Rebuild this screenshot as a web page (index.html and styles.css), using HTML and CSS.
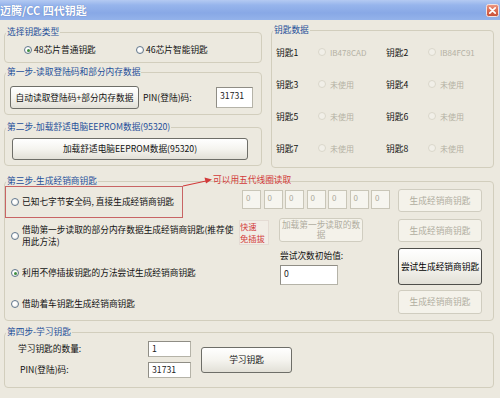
FILE: index.html
```html
<!DOCTYPE html>
<html lang="zh-CN">
<head>
<meta charset="utf-8">
<title>迈腾/CC 四代钥匙</title>
<link rel="stylesheet" href="styles.css">
</head>
<body>
<div class="window">
  <div class="titlebar">
    <span class="title">迈腾/CC 四代钥匙</span>
    <span class="close">
      <svg width="13" height="13" viewBox="0 0 13 13">
        <defs>
          <linearGradient id="cg" x1="0" y1="0" x2="0" y2="1">
            <stop offset="0" stop-color="#EE9A86"/>
            <stop offset="0.5" stop-color="#DB6A52"/>
            <stop offset="1" stop-color="#C7503A"/>
          </linearGradient>
        </defs>
        <rect x="0.5" y="0.5" width="12" height="12" rx="2" fill="url(#cg)" stroke="#F3E3E0"/>
        <path d="M3.8 3.8 L9.2 9.2 M9.2 3.8 L3.8 9.2" stroke="#FFFFFF" stroke-width="1.7" stroke-linecap="round"/>
      </svg>
    </span>
  </div>

  <div class="content">
    <div class="top">
      <div class="left-col">
        <fieldset class="group g1">
          <legend>选择钥匙类型</legend>
          <div class="g1-body">
            <span class="opt first"><span class="radio checked"></span>48芯片普通钥匙</span>
            <span class="opt"><span class="radio"></span>46芯片智能钥匙</span>
          </div>
        </fieldset>

        <fieldset class="group g2">
          <legend>第一步-读取登陆码和部分内存数据</legend>
          <div class="g2-body">
            <span class="btn read-btn">自动读取登陆码+部分内存数据</span>
            <span class="pin-label">PIN(登陆)码:</span>
            <span class="input pin-input">31731</span>
          </div>
        </fieldset>

        <fieldset class="group g3">
          <legend>第二步-加载舒适电脑EEPROM数据(95320)</legend>
          <div class="g3-body">
            <span class="btn eeprom-btn">加载舒适电脑EEPROM数据(95320)</span>
          </div>
        </fieldset>
      </div>

      <fieldset class="group keys">
        <legend>钥匙数据</legend>
        <div class="key-grid">
          <div class="key"><span class="key-name">钥匙1</span><span class="radio off"></span><span class="key-val">IB478CAD</span></div>
          <div class="key"><span class="key-name">钥匙2</span><span class="radio off"></span><span class="key-val">IB84FC91</span></div>
          <div class="key"><span class="key-name">钥匙3</span><span class="radio off"></span><span class="key-val">未使用</span></div>
          <div class="key"><span class="key-name">钥匙4</span><span class="radio off"></span><span class="key-val">未使用</span></div>
          <div class="key"><span class="key-name">钥匙5</span><span class="radio off"></span><span class="key-val">未使用</span></div>
          <div class="key"><span class="key-name">钥匙6</span><span class="radio off"></span><span class="key-val">未使用</span></div>
          <div class="key"><span class="key-name">钥匙7</span><span class="radio off"></span><span class="key-val">未使用</span></div>
          <div class="key"><span class="key-name">钥匙8</span><span class="radio off"></span><span class="key-val">未使用</span></div>
        </div>
      </fieldset>
    </div>

    <fieldset class="group step3">
      <legend>第三步-生成经销商钥匙</legend>
      <div class="step3-body">
        <div class="opts">
          <div class="opt-row highlight">
            <span class="radio"></span><span>已知七字节安全码, 直接生成经销商钥匙</span>
            <svg class="note-arrow" width="36" height="14" viewBox="0 0 36 14">
              <path d="M2 11 L25 6" stroke="#D23A3A" stroke-width="1.2"/>
              <polygon points="31,4.6 23.5,2.6 25,8.6" fill="#D23A3A"/>
            </svg>
            <span class="note">可以用五代线圈读取</span>
          </div>
          <div class="opt-row two-line"><span class="radio"></span><span class="opt-text">借助第一步读取的部分内存数据生成经销商钥匙(推荐使用此方法)</span></div>
          <div class="opt-row o3"><span class="radio checked"></span><span>利用不停插拔钥匙的方法尝试生成经销商钥匙</span></div>
          <div class="opt-row o4"><span class="radio"></span><span>借助着车钥匙生成经销商钥匙</span></div>
        </div>

        <div class="mid">
          <div class="cells">
            <span class="cell">0</span><span class="cell">0</span><span class="cell">0</span><span class="cell">0</span><span class="cell">0</span><span class="cell">0</span><span class="cell">0</span>
          </div>
          <div class="mid-row">
            <span class="quick">快速<br>免插拔</span>
            <span class="btn off load-btn">加载第一步读取的数据</span>
          </div>
          <div class="try-label">尝试次数初始值:</div>
          <div class="input try-input">0</div>
        </div>

        <div class="gen">
          <span class="btn off gen1">生成经销商钥匙</span>
          <span class="btn off gen2">生成经销商钥匙</span>
          <span class="btn gen3">尝试生成经销商钥匙</span>
          <span class="btn off gen4">生成经销商钥匙</span>
        </div>
      </div>
    </fieldset>

    <fieldset class="group step4">
      <legend>第四步-学习钥匙</legend>
      <div class="learn">
        <span class="learn-label">学习钥匙的数量:</span>
        <span class="input learn-input">1</span>
        <span class="btn learn-btn">学习钥匙</span>
        <span class="learn-label pin">PIN(登陆)码:</span>
        <span class="input learn-input">31731</span>
      </div>
    </fieldset>
  </div>
</div>
</body>
</html>
```

FILE: styles.css
```css
* { box-sizing: border-box; }
html, body { margin: 0; padding: 0; }
body {
  width: 500px;
  height: 398px;
  overflow: hidden;
  background: #ECE9DF;
  font-family: "Noto Sans CJK SC", "Noto Sans", sans-serif;
  font-size: 8.7px;
  color: #111;
}
.window { width: 500px; height: 398px; background: #ECE9DF; overflow: hidden; }

/* title bar */
.titlebar {
  height: 20px;
  display: flex;
  align-items: center;
  justify-content: space-between;
  background: linear-gradient(to bottom, #B4CAF2 0%, #97B5EC 25%, #88A8E6 65%, #94B3EA 100%);
}
.title {
  color: #fff;
  font-weight: 700;
  font-size: 11px;
  line-height: 14px;
  margin-left: 0;
  text-shadow: 0 0 1px rgba(40, 70, 140, 0.6);
}
.close { display: block; width: 13px; height: 13px; margin-right: 1px; }
.close svg { display: block; }

.content { padding: 0 6px 0 4px; }

/* group boxes */
.group {
  margin: 0;
  padding: 0;
  border: 1px solid #D2CEBD;
  border-radius: 4px;
  min-width: 0;
}
.group > legend {
  padding: 0 1px;
  margin-left: 1px;
  line-height: 10px;
  font-size: 8.7px;
  color: #1E4F99;
}

.top { display: flex; align-items: flex-start; gap: 9px; margin-top: 5px; }
.left-col { width: 258px; flex: none; padding-top: 2px; display: flex; flex-direction: column; }

/* radio */
.radio {
  flex: none;
  position: relative;
  display: inline-block;
  width: 8px;
  height: 8px;
  border-radius: 50%;
  border: 1px solid #62788F;
  background: radial-gradient(circle at 40% 40%, #FFFFFF 30%, #E2E0D8 100%);
}
.radio.checked::after {
  content: "";
  position: absolute;
  left: 1.5px; top: 1.5px;
  width: 3px; height: 3px;
  border-radius: 50%;
  background: #3E8E3E;
}
.radio.off { border-color: #DAD7CB; background: #F1EFE8; }

/* buttons & inputs */
.btn {
  display: flex;
  align-items: center;
  justify-content: center;
  text-align: center;
  border: 1px solid #6E6E68;
  border-radius: 3px;
  background: linear-gradient(to bottom, #FFFFFF 0%, #F5F4EF 50%, #E2E0D7 100%);
  color: #111;
  line-height: 10px;
}
.btn.off {
  border-color: #D0CDC0;
  background: #F4F2EA;
  color: #B0AD9F;
}
.input {
  display: block;
  background: #FFFFFF;
  border: 1px solid #B5B3A8;
  border-top-color: #8F8D85;
  border-left-color: #8F8D85;
  padding: 3px 3px 0;
  line-height: 10px;
  color: #222;
}

/* step 0 */
.g1-body { display: flex; align-items: center; height: 12px; margin: 7px 0 6px 19px; }
.opt { display: flex; align-items: center; gap: 2px; line-height: 12px; }
.opt.first { width: 112px; }

/* step 1 */
.g2 { margin-top: 4px; }
.g2-body { display: flex; align-items: center; margin: 9px 0 5px 5px; }
.read-btn { width: 129px; height: 23px; }
.pin-label { width: 73px; margin-left: 4px; line-height: 12px; }
.pin-input { width: 37px; height: 21px; }

/* step 2 */
.g3 { margin-top: 7px; }
.g3-body { margin: 6px 0 5px 7px; }
.eeprom-btn { width: 236px; height: 22px; }

/* keys */
.keys { flex: 1; }
.key-grid {
  display: grid;
  grid-template-columns: 110px 110px;
  grid-auto-rows: 32px;
  margin: 1px 0 3px 4px;
}
.key { display: flex; align-items: center; }
.key-name { width: 42px; color: #111; }
.key-val { margin-left: 4px; color: #B4B1A4; font-size: 8px; }

/* step 3 */
.step3 { margin-top: 8px; }
.step3-body { display: flex; align-items: flex-start; padding-bottom: 6px; }
.opts { width: 234px; flex: none; display: flex; flex-direction: column; }
.opt-row { display: flex; align-items: center; gap: 3px; padding-left: 6px; line-height: 12px; }
.highlight {
  position: relative;
  width: 178px;
  height: 32px;
  padding-left: 5px;
  border: 1px solid #C86464;
}
.note-arrow { position: absolute; left: 175px; top: -12px; }
.note {
  position: absolute;
  left: 207px;
  top: -12px;
  white-space: nowrap;
  line-height: 10px;
  color: #D23A3A;
}
.two-line { margin-top: 6px; }
.opt-text { width: 215px; }
.o3 { margin-top: 19px; }
.o4 { margin-top: 19px; }

.mid { width: 159px; flex: none; display: flex; flex-direction: column; }
.cells { display: flex; gap: 2.5px; margin: 4px 0 0 3px; }
.cell {
  width: 19px;
  height: 19px;
  background: #F6F5EF;
  border: 1px solid #C9C6B8;
  color: #ABA89A;
  font-size: 8px;
  line-height: 10px;
  padding: 2px 0 0 3px;
}
.mid-row { display: flex; align-items: flex-start; margin-top: 9px; }
.quick {
  flex: none;
  width: 30px;
  height: 25px;
  margin-top: 2px;
  padding: 0;
  white-space: nowrap;
  overflow: hidden;
  color: #D23B3B;
  font-size: 8.3px;
  line-height: 11.5px;
  background: #F1EDE6;
  border: 1px solid #E4DBD4;
}
.load-btn { width: 84px; height: 24px; margin-left: 10px; padding: 0 1px; }
.try-label { margin: 5px 0 0 41px; line-height: 12px; }
.try-input { width: 58px; height: 20px; margin: 3px 0 0 41px; }

.gen { width: 84px; flex: none; display: flex; flex-direction: column; }
.gen1 { height: 23px; margin-top: 3px; }
.gen2 { height: 23px; margin-top: 7px; }
.gen3 { height: 37px; margin-top: 6px; border-color: #4E4E4A; color: #000; }
.gen4 { height: 24px; margin-top: 5px; }

/* step 4 */
.step4 { margin-top: 6px; }
.learn {
  display: grid;
  grid-template-columns: 130px 43px 101px;
  grid-template-rows: 16px 16px;
  row-gap: 5px;
  align-items: center;
  margin: 4px 0 9px 13px;
}
.learn-label { line-height: 12px; }
.learn-label.pin { padding-left: 2px; }
.learn-input { height: 16px; padding: 2px 3px 0; }
.learn-btn {
  grid-column: 3;
  grid-row: 1 / span 2;
  align-self: center;
  width: 91px;
  height: 26px;
  margin-left: 10px;
}
```
